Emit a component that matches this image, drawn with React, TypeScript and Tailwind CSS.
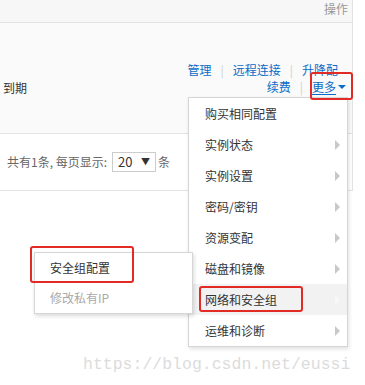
const menuItems = [
  { label: "购买相同配置", arrow: false },
  { label: "实例状态", arrow: true },
  { label: "实例设置", arrow: true },
  { label: "密码/密钥", arrow: true },
  { label: "资源变配", arrow: true },
  { label: "磁盘和镜像", arrow: true },
  { label: "网络和安全组", arrow: true, active: true },
  { label: "运维和诊断", arrow: true },
];

const Sep = () => <span className="mx-[9px] text-[#d0d0d0]">|</span>;

const App = () => {
  return (
    <div
      className="relative h-[385px] w-[365px] overflow-hidden bg-white text-[12px] text-[#333]"
      style={{ fontFamily: '"Noto Sans CJK SC", "Noto Sans", sans-serif' }}
    >
      {/* table */}
      <div className="w-[353px] border-r border-[#e3e3e3]">
        <div className="flex h-[23px] justify-end border-b border-[#e3e3e3] bg-[#f7f7f7] pr-[4px] pt-[1px] leading-[16px] text-[#999]">
          操作
        </div>
        <div className="flex h-[111px] items-start border-b border-[#e3e3e3] bg-[#fafafa]">
          <div className="pl-[3px] pt-[56px] leading-[17px]">到期</div>
          <div className="ml-auto flex flex-col items-end pt-[38px] leading-[17px] text-[#0a6cc6]">
            <div className="pr-[14px]">
              管理
              <Sep />
              远程连接
              <Sep />
              升降配
            </div>
            <div className="flex items-center pr-[6px]">
              续费
              <Sep />
              <span className="underline underline-offset-2">更多</span>
              <span className="ml-[2px] h-0 w-0 border-x-[4px] border-t-[4px] border-x-transparent border-t-[#0a6cc6]" />
            </div>
          </div>
        </div>
        <div className="flex h-[57px] items-center border-b border-[#e3e3e3] pl-[7px] text-[#666]">
          <span>共有1条, 每页显示:</span>
          <div className="ml-[5px] flex h-[20px] w-[44px] items-center border border-[#ccc] pl-[5px] text-[#333]">
            <span className="text-[13px]">20</span>
            <span className="ml-auto mr-[5px] text-[9px]">▼</span>
          </div>
          <span className="ml-[2px]">条</span>
        </div>
      </div>

      {/* dropdown menu */}
      <div className="absolute left-[188px] top-[97px] z-10 w-[160px] border border-[#d6d6d6] bg-white shadow-[1px_2px_4px_rgba(0,0,0,0.12)]">
        {menuItems.map((item) => (
          <div
            key={item.label}
            className={`flex h-[31px] items-center pl-[16px] ${item.active ? "bg-[#f2f2f2]" : ""}`}
          >
            {item.label}
            {item.arrow && (
              <span
                className={`ml-auto mr-[7px] h-0 w-0 border-y-[5px] border-l-[5px] border-y-transparent ${
                  item.active ? "border-l-[#f8f8f8]" : "border-l-[#c8c8c8]"
                }`}
              />
            )}
          </div>
        ))}
      </div>

      {/* submenu */}
      <div className="absolute left-[34px] top-[252px] z-20 w-[159px] border border-[#d6d6d6] bg-white shadow-[1px_2px_4px_rgba(0,0,0,0.15)]">
        <div className="flex h-[30px] items-center pl-[15px]">安全组配置</div>
        <div className="flex h-[30px] items-center pl-[15px] text-[#aaa]">修改私有IP</div>
      </div>

      {/* highlight boxes */}
      <div className="absolute left-[310px] top-[72px] z-30 h-[28px] w-[43px] rounded-[3px] border-2 border-[#e32b25]" />
      <div className="absolute left-[30px] top-[246px] z-30 h-[37px] w-[104px] rounded-[3px] border-2 border-[#e32b25]" />
      <div className="absolute left-[199px] top-[286px] z-30 h-[26px] w-[104px] rounded-[3px] border-2 border-[#e32b25]" />

      {/* watermark */}
      <div
        className="absolute left-[83px] top-[354px] z-30 text-[16.5px] leading-[22px] text-[#dcdcdc]"
        style={{ fontFamily: '"Liberation Mono", monospace' }}
      >
        https://blog.csdn.net/eussi
      </div>
    </div>
  );
};

export default App;
